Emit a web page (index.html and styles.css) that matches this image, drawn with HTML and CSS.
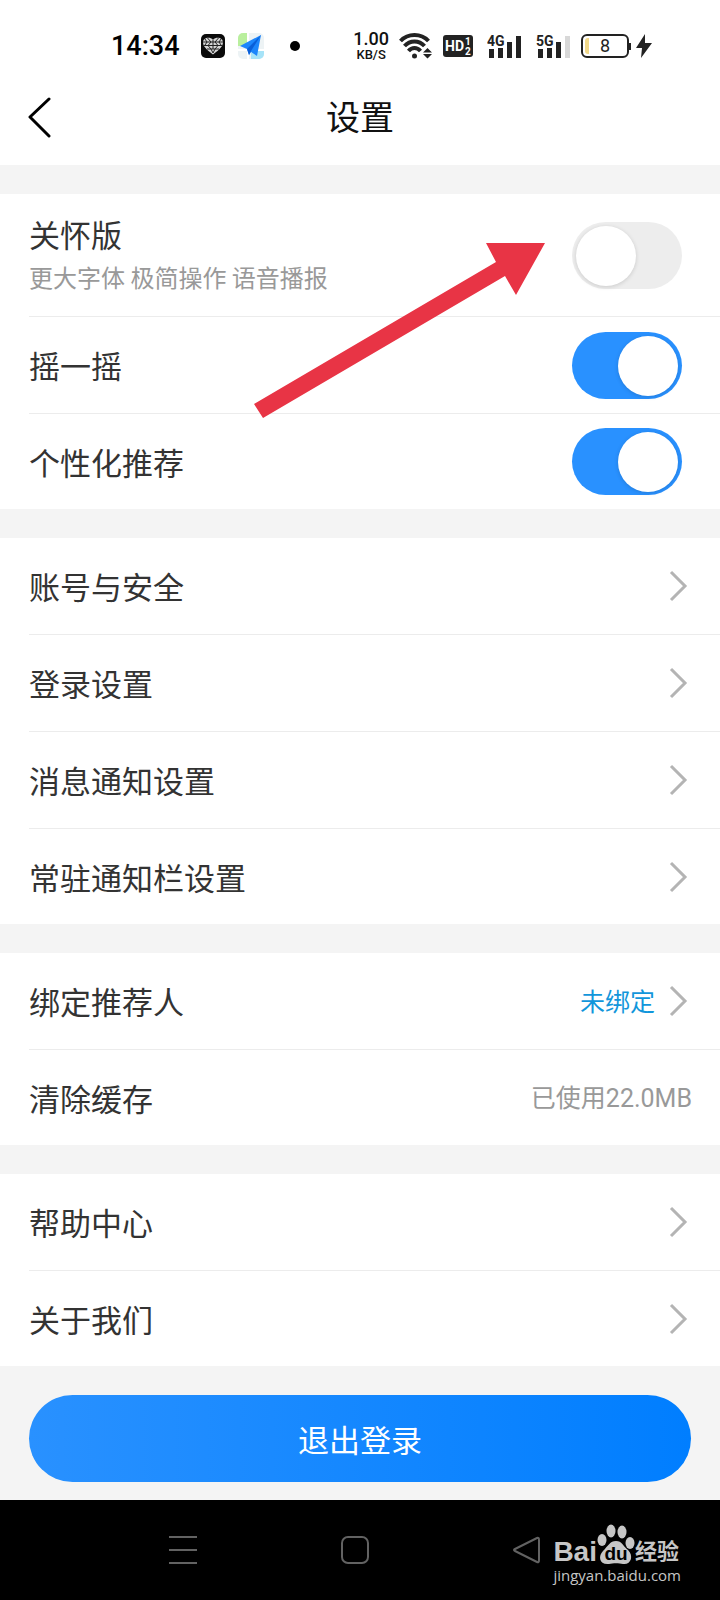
FILE: index.html
```html
<!DOCTYPE html>
<html lang="zh-CN">
<head>
  <meta charset="UTF-8">
  <meta name="viewport" content="width=device-width, initial-scale=1">
  <title>设置</title>
  <link rel="stylesheet" href="styles.css">
</head>
<body>
  <!-- Shared icon shapes -->
  <svg width="0" height="0" class="defs" aria-hidden="true">
    <symbol id="chevron" viewBox="0 0 20 32">
      <path d="M3 2 L17 16 L3 30" fill="none" stroke="#b4b4b4" stroke-width="3"/>
    </symbol>
  </svg>

  <div class="status-bar">
    <div class="status-left">
      <span class="time">14:34</span>
      <svg class="app-heart" width="24" height="24" viewBox="0 0 24 24">
        <rect width="24" height="24" rx="5" fill="#0a0a0a"/>
        <path d="M12 20.500 C9 18 2 13.500 2 8.500 C2 3.500 8.500 2.500 12 5.500 C15.500 2.500 22 3.500 22 8.500 C22 13.500 15 18 12 20.500Z" fill="#d6d6d6"/>
        <path d="M2 8 H22 M3 11.500 H21 M6 15 H18 M6.500 4 L10 8 L7 11.500 L10 15 L12 19 L14 15 L17 11.500 L14 8 L17.500 4 M4 5 L6 8 L4 11 M20 5 L18 8 L20 11 M12 5.500 V15" fill="none" stroke="#222" stroke-width="1"/>
      </svg>
      <svg class="app-map" width="28" height="28" viewBox="0 0 28 28">
        <rect x="1" y="1" width="26" height="26" rx="5" fill="#edf3f5"/>
        <path d="M1 6 A5 5 0 0 1 6 1 H12 V9 L7 14 H1Z" fill="#b9ef9d"/>
        <path d="M14 27 V21 L20 18 H27 V22 A5 5 0 0 1 22 27Z" fill="#a6e3f8"/>
        <path d="M11 1 V27 M1 18 H27" stroke="#fff" stroke-width="2"/>
        <path d="M24 3 L3 14 L10 17 L12 23 L14 20 L20 24Z" fill="#1d86fb"/>
        <path d="M24 3 L10 17 L12 23 L14 19Z" fill="#0a5fd8"/>
      </svg>
      <span class="dot"></span>
    </div>
    <div class="status-right">
      <span class="speed"><b>1.00</b><small>KB/S</small></span>
      <svg width="34" height="26" viewBox="0 0 34 26">
        <g fill="none" stroke="#222" stroke-width="4">
          <path d="M1.500 8 C9 0 22 0 29.500 8"/>
          <path d="M5.500 13 C11 7 20 7 25.500 13"/>
          <path d="M9.500 18 C13 14 18 14 21.500 18"/>
        </g>
        <circle cx="15.500" cy="23" r="2.500" fill="#222"/>
        <path d="M24 19.500 L28.500 15 L33 19.500Z M24 21 H33 L28.500 25.500Z" fill="#222"/>
      </svg>
      <svg class="hd" width="30" height="22" viewBox="0 0 30 22">
        <rect width="30" height="22" rx="3" fill="#222"/>
        <text x="2" y="16" class="hd-text">HD</text>
        <text x="22" y="10" class="hd-num">1</text>
        <text x="22" y="20" class="hd-num">2</text>
      </svg>
      <svg class="signal" width="35" height="26" viewBox="0 0 35 26">
        <text x="0" y="13" class="net">4G</text>
        <path d="M2 16 H7 V25 H2Z M11 15 H16 V25 H11Z M20 9 H25 V25 H20Z M29 3 H34 V25 H29Z" fill="#222"/>
      </svg>
      <svg class="signal" width="35" height="26" viewBox="0 0 35 26">
        <text x="0" y="13" class="net">5G</text>
        <path d="M2 16 H7 V25 H2Z M11 15 H16 V25 H11Z M20 9 H25 V25 H20Z" fill="#222"/>
        <path d="M29 3 H34 V25 H29Z" fill="#d8d8d8"/>
      </svg>
      <svg class="battery" width="51" height="24" viewBox="0 0 51 24">
        <rect x="1" y="1" width="46" height="22" rx="5" fill="none" stroke="#222" stroke-width="2"/>
        <path d="M7 4 H8 V20 H7 A3 3 0 0 1 4 17 V7 A3 3 0 0 1 7 4Z" fill="#f2d98a"/>
        <path d="M49 9 V16" stroke="#222" stroke-width="2"/>
        <text x="24" y="18" text-anchor="middle" class="level">8</text>
      </svg>
      <svg width="16" height="24" viewBox="0 0 16 24">
        <path d="M9 0 L0 14 H6 L5 24 L16 9 H9Z" fill="#222"/>
      </svg>
    </div>
  </div>

  <header class="title-bar">
    <button class="back" aria-label="返回">
      <svg width="24" height="42" viewBox="0 0 24 42">
        <path d="M22 2 L3 20 L22 39" fill="none" stroke="#000" stroke-width="3" stroke-linecap="round" stroke-linejoin="round"/>
      </svg>
    </button>
    <h1>设置</h1>
  </header>

  <main>
    <section class="group">
      <label class="row row-tall">
        <span class="label">关怀版<small>更大字体 极简操作 语音播报</small></span>
        <input type="checkbox" class="switch">
      </label>
      <label class="row">
        <span class="label">摇一摇</span>
        <input type="checkbox" class="switch" checked>
      </label>
      <label class="row">
        <span class="label">个性化推荐</span>
        <input type="checkbox" class="switch" checked>
      </label>
      <svg class="arrow" width="292" height="176" viewBox="0 0 292 176" aria-hidden="true">
        <path d="M0 161 L242 19 L232 0 H291 L262 52 L251 33 L9 175Z" fill="#e83445"/>
      </svg>
    </section>

    <nav class="group">
      <a href="#" class="row"><span class="label">账号与安全</span><svg class="chevron"><use href="#chevron"/></svg></a>
      <a href="#" class="row"><span class="label">登录设置</span><svg class="chevron"><use href="#chevron"/></svg></a>
      <a href="#" class="row"><span class="label">消息通知设置</span><svg class="chevron"><use href="#chevron"/></svg></a>
      <a href="#" class="row"><span class="label">常驻通知栏设置</span><svg class="chevron"><use href="#chevron"/></svg></a>
    </nav>

    <section class="group">
      <a href="#" class="row"><span class="label">绑定推荐人</span><span class="value link">未绑定</span><svg class="chevron"><use href="#chevron"/></svg></a>
      <a href="#" class="row"><span class="label">清除缓存</span><span class="value">已使用22.0MB</span></a>
    </section>

    <nav class="group">
      <a href="#" class="row"><span class="label">帮助中心</span><svg class="chevron"><use href="#chevron"/></svg></a>
      <a href="#" class="row"><span class="label">关于我们</span><svg class="chevron"><use href="#chevron"/></svg></a>
    </nav>
  </main>

  <div class="actions">
    <button class="logout">退出登录</button>
  </div>

  <footer class="system-nav">
    <button aria-label="菜单">
      <svg width="28" height="28" viewBox="0 0 28 28"><path d="M0 1 H28 M0 14 H28 M0 27 H28" stroke="#626262" stroke-width="2"/></svg>
    </button>
    <button aria-label="主页">
      <svg width="28" height="28" viewBox="0 0 28 28"><rect x="1" y="1" width="26" height="26" rx="6" fill="none" stroke="#626262" stroke-width="2"/></svg>
    </button>
    <button aria-label="后退">
      <svg width="28" height="28" viewBox="0 0 28 28"><path d="M24 2 Q26 1 26 4 V24 Q26 27 24 26 L2 15 Q0 14 2 13Z" fill="none" stroke="#626262" stroke-width="2"/></svg>
    </button>
    <div class="watermark">
      <div class="brand">
        <span class="bai">Bai</span>
        <svg width="38" height="42" viewBox="0 0 38 42">
          <g fill="#c6c6c6">
            <ellipse cx="5" cy="16" rx="4.500" ry="6"/>
            <ellipse cx="14" cy="7" rx="4.500" ry="6.500"/>
            <ellipse cx="25" cy="8" rx="4.500" ry="6.500"/>
            <ellipse cx="33" cy="19" rx="4.500" ry="6"/>
            <path d="M19 17 C25 17 26 22 31 26 C37 32 34 41 26 40 C22 39 16 39 12 40 C2 41 1 32 6 27 C11 22 13 17 19 17Z"/>
          </g>
          <text x="19" y="36" text-anchor="middle" class="du">du</text>
        </svg>
        <span class="jingyan">经验</span>
      </div>
      <div class="site">jingyan.baidu.com</div>
    </div>
  </footer>
</body>
</html>
```

FILE: styles.css
```css
* {
  box-sizing: border-box;
}
body {
  margin: 0;
  background-color: #f4f4f4;
  color: #333;
  font-family: Roboto, "Noto Sans CJK SC", sans-serif;
}
button {
  padding: 0;
  border: none;
  background: none;
  font-family: inherit;
}
svg {
  display: block;
  flex: none;
}
.defs {
  position: absolute;
}

/* Phone status bar */
.status-bar {
  display: flex;
  justify-content: space-between;
  align-items: center;
  height: 70px;
  padding: 22px 68px 0 111px;
  background-color: #fff;
}
.status-left, .status-right {
  display: flex;
  align-items: center;
}
.time {
  color: #000;
  font-size: 27px;
  font-weight: 500;
  line-height: 32px;
}
.app-heart {
  margin-left: 21px;
}
.app-map {
  margin-left: 12px;
}
.dot {
  width: 10px;
  height: 10px;
  margin-left: 25px;
  border-radius: 50%;
  background-color: #000;
}
.status-right {
  gap: 10px;
}
.speed {
  display: flex;
  flex-direction: column;
  align-items: center;
  color: #111;
}
.speed b {
  font-size: 18px;
  font-weight: 500;
  line-height: 18px;
}
.speed small {
  font-size: 13px;
  font-weight: 500;
  line-height: 14px;
}
.signal {
  margin-left: 4px;
}
.hd-text {
  font-size: 14px;
  font-weight: 700;
  fill: #fff;
}
.hd-num {
  font-size: 10px;
  font-weight: 700;
  fill: #fff;
}
.net {
  font-size: 14px;
  font-weight: 700;
  fill: #222;
}
.battery {
  margin-right: -6px;
}
.level {
  font-size: 18px;
  font-weight: 400;
  fill: #222;
}

/* Title bar */
.title-bar {
  display: grid;
  grid-template-columns: 1fr auto 1fr;
  align-items: center;
  height: 95px;
  padding: 0 27px;
  background-color: #fff;
}
.back {
  justify-self: start;
}
h1 {
  margin: 0;
  color: #111;
  font-size: 34px;
  font-weight: 400;
  line-height: 48px;
}

/* Setting groups */
.group {
  position: relative;
  margin-top: 29px;
  padding-left: 29px;
  background-color: #fff;
}
.row {
  display: flex;
  align-items: center;
  min-height: 97px;
  padding-right: 32px;
  border-bottom: 1px solid #ececec;
  color: inherit;
  text-decoration: none;
}
.row:last-of-type {
  min-height: 95px;
  border-bottom: none;
}
.row-tall {
  min-height: 123px;
}
.label {
  flex: 1;
  font-family: "Noto Sans CJK SC", sans-serif;
  font-size: 31px;
  line-height: 44px;
}
.label small {
  display: block;
  color: #999;
  font-size: 24px;
  line-height: 42px;
}
.value {
  padding-top: 3px;
  color: #999;
  font-size: 25px;
  line-height: 36px;
}
.value:last-child {
  margin-right: -4px;
}
.link {
  margin-right: 13px;
  color: #1296db;
}
.chevron {
  width: 20px;
  height: 32px;
}

/* Toggle */
.switch {
  appearance: none;
  flex: none;
  width: 110px;
  height: 67px;
  margin: 0 6px 0 0;
  padding: 4px;
  border-radius: 34px;
  background-color: #ededed;
}
.switch::before {
  content: "";
  display: block;
  width: 60px;
  height: 60px;
  border-radius: 50%;
  background-color: #fff;
  box-shadow: 0 1px 4px rgba(0, 0, 0, 0.15);
}
.switch:checked {
  background-color: #2991ff;
}
.switch:checked::before {
  margin-left: auto;
}

/* Pointer drawn over the first group */
.arrow {
  position: absolute;
  top: 49px;
  left: 254px;
  pointer-events: none;
}

.actions {
  padding: 29px 29px 18px;
}
.logout {
  width: 100%;
  height: 87px;
  border-radius: 44px;
  background: linear-gradient(90deg, #2991ff, #007eff);
  color: #fff;
  font-size: 31px;
}

/* System navigation */
.system-nav {
  position: relative;
  display: flex;
  justify-content: center;
  align-items: center;
  gap: 144px;
  height: 100px;
  padding-right: 11px;
  background-color: #000;
}
.watermark {
  position: absolute;
  right: 39px;
  bottom: 16px;
  color: #c6c6c6;
}
.brand {
  display: flex;
  align-items: flex-end;
}
.bai {
  font-family: "Liberation Sans", sans-serif;
  font-size: 28px;
  font-weight: 700;
  line-height: 28px;
}
.du {
  font-family: "Liberation Sans", sans-serif;
  font-size: 19px;
  font-weight: 700;
  fill: #000;
}
.jingyan {
  font-size: 22px;
  font-weight: 700;
  line-height: 28px;
}
.site {
  font-family: "Open Sans", sans-serif;
  font-size: 15px;
  line-height: 18px;
}
```
